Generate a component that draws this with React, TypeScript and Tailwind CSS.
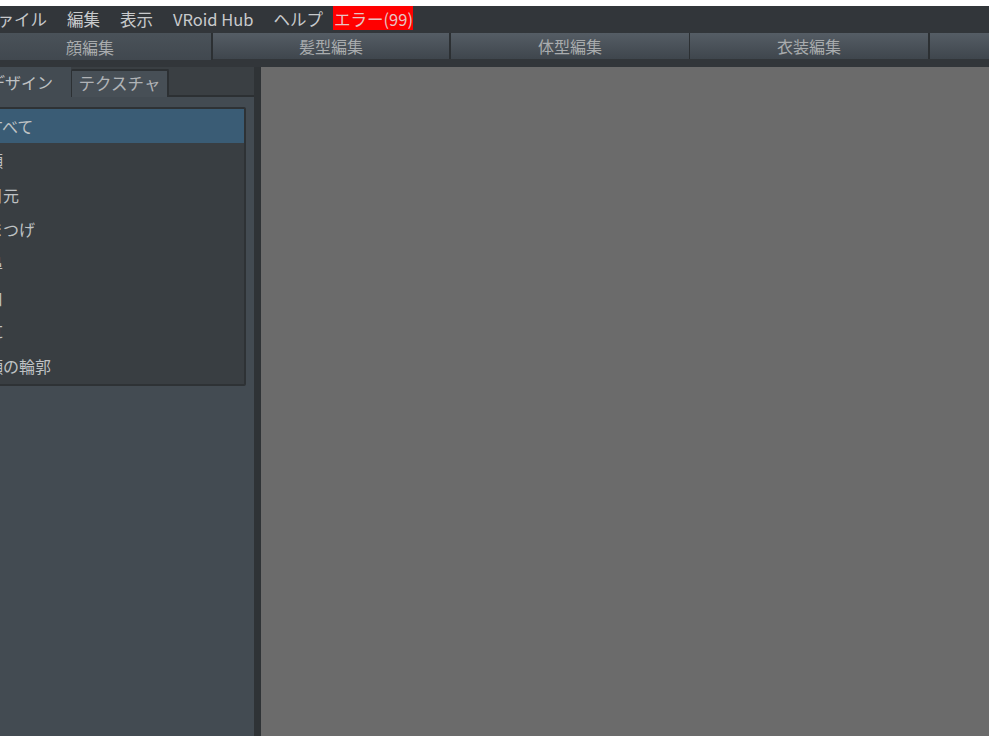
const menus = ["ファイル", "編集", "表示", "VRoid Hub", "ヘルプ"];
const items = ["すべて", "顔", "目元", "まつげ", "鼻", "口", "耳", "顔の輪郭"];

const tabBtn = "flex h-[26px] shrink-0 items-center justify-center border-[#2c3033] bg-gradient-to-b from-[#555d65] to-[#3f464d] text-[#a9acae]";

export default function App() {
  return (
    <div className="h-[736px] w-[989px] overflow-hidden bg-white font-['Noto_Sans_CJK_JP',sans-serif] text-[16px]">
      {/* menu bar, the window starts left of the page */}
      <div className="mt-[6px] flex h-[27px] items-start bg-[#32363a] text-[16.5px] text-[#c8cacc]">
        <div className="-ml-[19px] flex">
          {menus.map((m) => (
            <span key={m} className="mr-[20px] whitespace-nowrap leading-[26px]">{m}</span>
          ))}
          <span className="-ml-[10px] h-[24px] whitespace-nowrap bg-[#ff0000] pl-[1px] leading-[26px] text-[#e8c4c4]">エラー(99)</span>
        </div>
      </div>

      <div className="flex h-[34px] items-start bg-[#32363a]">
        <div className="-ml-[31px] flex h-[27px] w-[244px] shrink-0 items-center justify-center border-r-2 border-[#2c3033] bg-gradient-to-b from-[#4a5259] to-[#41484f] text-[#a9acae]">顔編集</div>
        <div className={`${tabBtn} w-[238px] border-r-2`}>髪型編集</div>
        <div className={`${tabBtn} w-[239px] border-r`}>体型編集</div>
        <div className={`${tabBtn} w-[240px] border-r-2`}>衣装編集</div>
        <div className={`${tabBtn} flex-1`}></div>
      </div>

      <div className="flex h-[669px]">
        <div className="w-[254px] shrink-0 bg-[#434b52]">
          <div className="flex h-[30px] items-end bg-[#3a3f43]">
            <div className="flex h-[30px] w-[71px] shrink-0 items-center bg-[#434b52] text-[#bfc2c4]">
              <span className="-ml-[11px] whitespace-nowrap">デザイン</span>
            </div>
            <div className="flex h-[28px] w-[98px] shrink-0 items-center justify-center rounded-t-[2px] border-t-2 border-r-2 border-l border-[#2c3033] bg-[#474f56] pb-[2px] text-[16.5px] text-[#b0b3b6]">
              <span className="whitespace-nowrap">テクスチャ</span>
            </div>
            <div className="h-[2px] flex-1 bg-[#2c3033]"></div>
          </div>
          <div className="pt-[10px]">
            <div className="-ml-[4px] h-[279px] w-[250px] overflow-hidden rounded-[2px] border-2 border-[#2e3235] bg-[#393e42] text-[#bfc2c4]">
              {items.map((t, i) => (
                <div key={t} className={`flex h-[34.3px] items-center ${i === 0 ? "bg-[#3a5c75]" : ""}`}>
                  <span className="-ml-[11px] whitespace-nowrap">{t}</span>
                </div>
              ))}
            </div>
          </div>
        </div>
        <div className="w-[7px] shrink-0 bg-[#2f3336]"></div>
        <div className="flex-1 bg-[#6b6b6b]"></div>
      </div>
    </div>
  );
}
